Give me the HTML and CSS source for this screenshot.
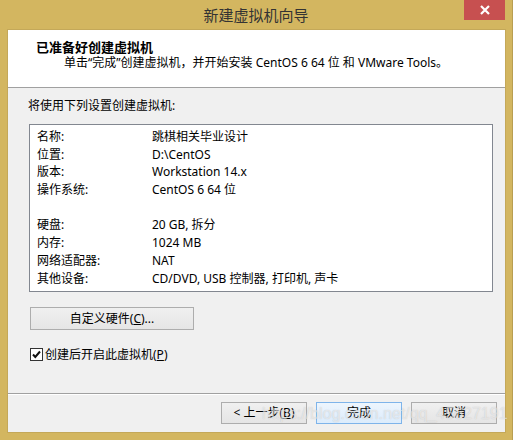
FILE: index.html
```html
<!DOCTYPE html>
<html lang="zh-CN">
<head>
<meta charset="utf-8">
<title>新建虚拟机向导</title>
<link rel="stylesheet" href="styles.css">
</head>
<body>
<div class="window">
  <div class="titlebar">
    <div class="title">新建虚拟机向导</div>
    <div class="close">
      <svg width="12" height="10" viewBox="0 0 12 10"><path d="M2 1 L10 9 M10 1 L2 9" stroke="#fff" stroke-width="2.2" fill="none"/></svg>
    </div>
  </div>
  <div class="client">
    <div class="header">
      <div class="header-title">已准备好创建虚拟机</div>
      <div class="header-sub">单击“完成”创建虚拟机，并开始安装 CentOS 6 64 位 和 VMware Tools。</div>
    </div>
    <div class="main">
      <div class="intro">将使用下列设置创建虚拟机:</div>
      <div class="summary">
        <div class="row"><span class="label">名称:</span><span class="value">跳棋相关毕业设计</span></div>
        <div class="row"><span class="label">位置:</span><span class="value">D:\CentOS</span></div>
        <div class="row"><span class="label">版本:</span><span class="value">Workstation 14.x</span></div>
        <div class="row"><span class="label">操作系统:</span><span class="value">CentOS 6 64 位</span></div>
        <div class="row"></div>
        <div class="row"><span class="label">硬盘:</span><span class="value">20 GB, 拆分</span></div>
        <div class="row"><span class="label">内存:</span><span class="value">1024 MB</span></div>
        <div class="row"><span class="label">网络适配器:</span><span class="value">NAT</span></div>
        <div class="row"><span class="label">其他设备:</span><span class="value">CD/DVD, USB 控制器, 打印机, 声卡</span></div>
      </div>
      <button class="btn btn-custom">自定义硬件(<u>C</u>)...</button>
      <div class="check-row">
        <span class="checkbox">
          <svg width="13" height="13" viewBox="0 0 13 13"><rect x="0.5" y="0.5" width="12" height="12" fill="#fff" stroke="#333"/><path d="M3 6.5 L5.3 9 L10 3.5" stroke="#111" stroke-width="2" fill="none"/></svg>
        </span>
        <span class="check-label">创建后开启此虚拟机(<u>P</u>)</span>
      </div>
    </div>
    <div class="footer">
      <button class="btn btn-foot">&lt; 上一步(<u>B</u>)</button>
      <button class="btn btn-foot btn-primary">完成</button>
      <button class="btn btn-foot">取消</button>
    </div>
  </div>
  <div class="watermark">https://blog.csdn.net/qq_45627191</div>
</div>
</body>
</html>
```
FILE: styles.css
```css
html, body {
  margin: 0;
  padding: 0;
}
body {
  background: #d3b660;
  font-family: "Noto Sans", "Noto Sans CJK SC", sans-serif;
  font-size: 12px;
  color: #000;
}
.window {
  width: 513px;
  height: 440px;
  display: flex;
  flex-direction: column;
  position: relative;
  box-sizing: border-box;
  border-right: 1px solid #b89e52;
  overflow: hidden;
}
.titlebar {
  height: 30px;
  display: grid;
  grid-template-columns: 1fr auto 1fr;
  align-items: start;
}
.title {
  grid-column: 2;
  line-height: 30px;
  font-size: 15px;
  color: #333;
  font-family: "Noto Sans CJK SC", sans-serif;
}
.close {
  grid-column: 3;
  justify-self: end;
  margin-right: 7px;
  width: 41px;
  height: 20px;
  background: #c75050;
  display: flex;
  align-items: center;
  justify-content: center;
}
.close svg {
  display: block;
}
.client {
  flex: 1;
  margin: 0 7px 8px 8px;
  background: #f0f0f0;
  display: flex;
  flex-direction: column;
  box-shadow: 0 0 0 1px #c4a859;
}
.header {
  height: 58px;
  background: #fff;
  border-bottom: 1px solid #a0a0a0;
  padding-top: 9px;
  box-sizing: border-box;
}
.header-title {
  font-weight: bold;
  font-size: 13px;
  line-height: 16px;
  padding-left: 28px;
}
.header-sub {
  line-height: 16px;
  padding-left: 56px;
}
.main {
  flex: 1;
  padding: 9px 12px 0 20px;
}
.intro {
  line-height: 18px;
}
.summary {
  margin: 9px 0 0 1px;
  width: 464px;
  height: 168px;
  box-sizing: border-box;
  border: 1px solid #828790;
  background: #fff;
  padding: 3px 0 0 7px;
}
.row {
  display: flex;
  height: 17.7px;
  line-height: 17.7px;
  white-space: nowrap;
}
.label {
  width: 115px;
  flex: none;
}
.btn {
  font-family: "Noto Sans", "Noto Sans CJK SC", sans-serif;
  font-size: 12px;
  color: #000;
  border: 1px solid #adadad;
  background: linear-gradient(#f0f0f0, #e5e5e5);
  padding: 0;
  margin: 0;
  box-sizing: border-box;
  line-height: 18px;
}
.btn u {
  text-underline-offset: 1px;
}
.btn-custom {
  display: block;
  margin: 15px 0 0 2px;
  width: 164px;
  height: 23px;
}
.check-row {
  margin: 17px 0 0 2px;
  display: flex;
  align-items: center;
  height: 14px;
}
.checkbox {
  width: 13px;
  height: 13px;
  flex: none;
}
.checkbox svg {
  display: block;
}
.check-label {
  margin-left: 2px;
  line-height: 16px;
  padding-top: 2px;
}
.footer {
  border-top: 1px solid #a0a0a0;
  box-shadow: inset 0 1px 0 #fff;
  padding: 8px 8px 8px;
  display: flex;
  justify-content: flex-end;
  gap: 9px;
}
.btn-foot {
  width: 86px;
  height: 22px;
}
.btn-primary {
  border-color: #7eb4ea;
  background: linear-gradient(#edf5fd, #dcecfc);
}
.watermark {
  position: absolute;
  left: 262px;
  top: 404px;
  font-family: "Liberation Sans", sans-serif;
  font-size: 16px;
  line-height: 20px;
  color: rgba(255, 255, 255, 0.55);
  text-shadow: 0 0 1px rgba(110, 110, 110, 0.35);
  white-space: nowrap;
  pointer-events: none;
}
```
